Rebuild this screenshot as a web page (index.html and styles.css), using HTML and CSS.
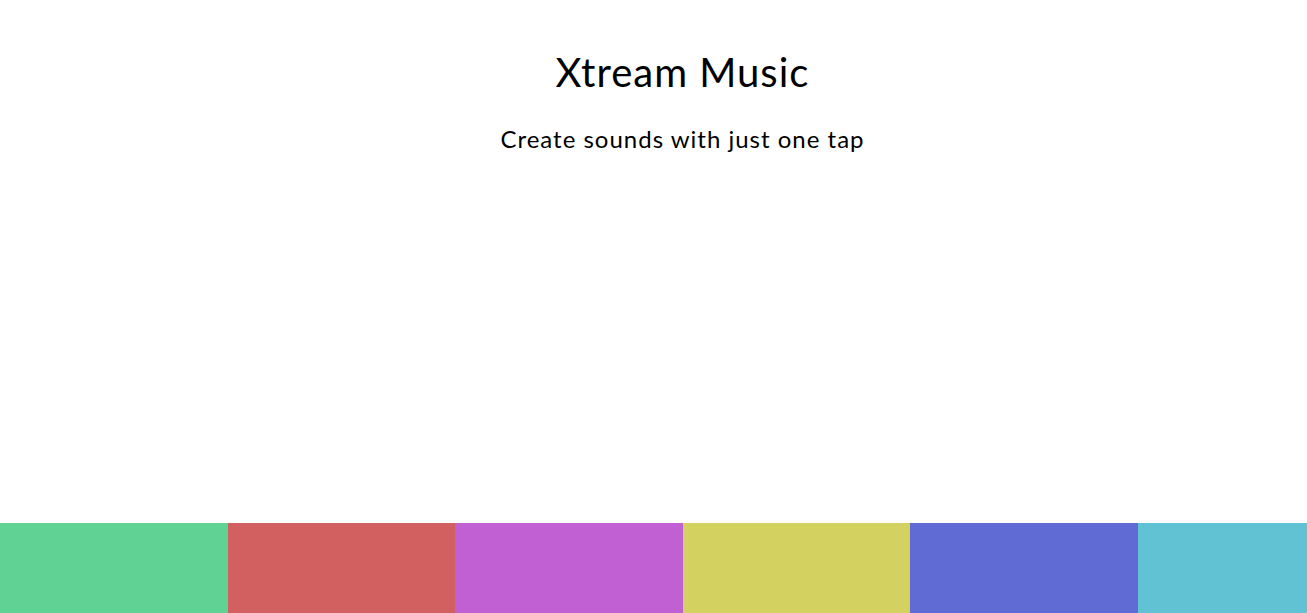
FILE: index.html
```html
<!DOCTYPE html>
<html lang="en">
<head>
<meta charset="UTF-8">
<title>Xtream Music</title>
<link rel="stylesheet" href="styles.css">
</head>
<body>
<main class="app">
  <header class="intro">
    <h1 class="title">Xtream Music</h1>
    <p class="subtitle">Create sounds with just one tap</p>
  </header>
  <div class="pads">
    <div class="pad pad-green"></div>
    <div class="pad pad-red"></div>
    <div class="pad pad-purple"></div>
    <div class="pad pad-yellow"></div>
    <div class="pad pad-blue"></div>
    <div class="pad pad-cyan"></div>
  </div>
</main>
</body>
</html>
```
FILE: styles.css
```css
* { box-sizing: border-box; margin: 0; padding: 0; }
html, body { height: 100%; }
body {
  font-family: "Lato", "Open Sans", sans-serif;
  color: #000;
  background: #fff;
  overflow: hidden;
}
.app {
  height: 100vh;
  display: flex;
  flex-direction: column;
  justify-content: space-between;
}
.intro {
  display: flex;
  flex-direction: column;
  align-items: center;
  padding-top: 48px;
  padding-left: 58px;
}
.title {
  font-weight: 400;
  font-size: 40px;
  line-height: 48px;
  letter-spacing: 1px;
}
.subtitle {
  font-size: 24px;
  font-weight: 400;
  margin-top: 28px;
  line-height: 30px;
  letter-spacing: 1px;
}
.pads {
  display: flex;
  height: 90px;
  overflow: hidden;
}
.pad { flex: 0 0 227.5px; height: 100%; }
.pad-green { background: #60d394; }
.pad-red { background: #d36060; }
.pad-purple { background: #c060d3; }
.pad-yellow { background: #d3d160; }
.pad-blue { background: #606bd3; }
.pad-cyan { background: #60c2d3; }
```
